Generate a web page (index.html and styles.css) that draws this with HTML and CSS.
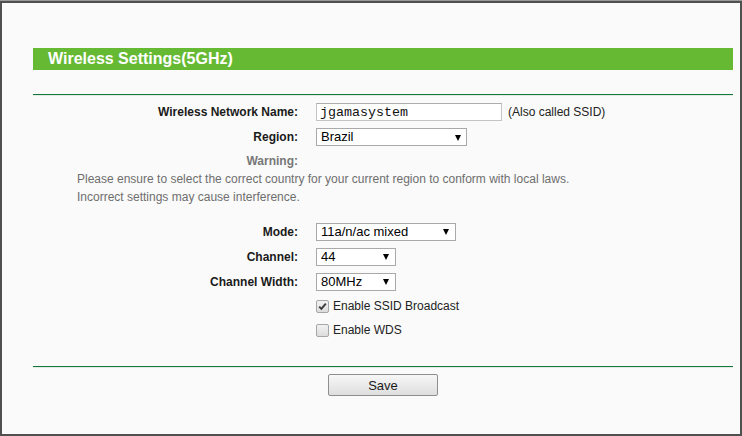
FILE: index.html
```html
<!DOCTYPE html>
<html>
<head>
<meta charset="utf-8">
<title>Wireless Settings(5GHz)</title>
<link rel="stylesheet" href="styles.css">
</head>
<body>
<div class="outer">
  <div class="frame">
    <div class="title">Wireless Settings(5GHz)</div>
    <div class="rule"></div>
    <form class="form">
      <div class="row r-name">
        <label class="lbl">Wireless Network Name:</label>
        <div class="ctl">
          <input class="text" type="text" value="jgamasystem">
          <span class="hint">(Also called SSID)</span>
        </div>
      </div>
      <div class="row r-region">
        <label class="lbl">Region:</label>
        <div class="ctl">
          <span class="sel w-region"><select><option>Brazil</option></select></span>
        </div>
      </div>
      <div class="row r-warn">
        <span class="lbl warn">Warning:</span>
        <span></span>
      </div>
      <p class="warntext">Please ensure to select the correct country for your current region to conform with local laws.<br>Incorrect settings may cause interference.</p>
      <div class="row r-mode">
        <label class="lbl">Mode:</label>
        <div class="ctl">
          <span class="sel w-mode"><select><option>11a/n/ac mixed</option></select></span>
        </div>
      </div>
      <div class="row r-sel">
        <label class="lbl">Channel:</label>
        <div class="ctl">
          <span class="sel w-small"><select><option>44</option></select></span>
        </div>
      </div>
      <div class="row r-sel">
        <label class="lbl">Channel Width:</label>
        <div class="ctl">
          <span class="sel w-small"><select><option>80MHz</option></select></span>
        </div>
      </div>
      <div class="row r-check">
        <span></span>
        <label class="chk">
          <span class="box"><svg width="11" height="11" viewBox="0 0 11 11"><path d="M2.2 5.6 L4.4 7.9 L8.8 2.6" fill="none" stroke="#3a3a3a" stroke-width="1.9"/></svg></span>
          Enable SSID Broadcast
        </label>
      </div>
      <div class="row r-check2">
        <span></span>
        <label class="chk">
          <span class="box"></span>
          Enable WDS
        </label>
      </div>
      <div class="rule rule2"></div>
      <div class="actions">
        <button type="button" class="btn">Save</button>
      </div>
    </form>
  </div>
</div>
</body>
</html>
```
FILE: styles.css
```css
html, body {
  margin: 0;
  padding: 0;
}
body {
  background: #fafafa;
  font-family: "Liberation Sans", Arial, sans-serif;
  font-size: 12px;
  color: #1a1a1a;
}
.outer {
  border-top: 1px solid #9a9a9a;
  height: 436px;
  box-sizing: border-box;
}
.frame {
  height: 435px;
  box-sizing: border-box;
  border: 2px solid #505050;
  background: #fafafa;
  padding: 45px 7px 0 31px;
}
.title {
  height: 22px;
  line-height: 22px;
  background: #66b933;
  color: #fff;
  font-weight: bold;
  font-size: 16px;
  padding-left: 15px;
}
.rule {
  margin-top: 24px;
  height: 1px;
  background: #11783a;
  border-bottom: 1px solid #e3ece5;
}
.form {
  margin: 0;
  display: flex;
  flex-direction: column;
}
.row {
  display: grid;
  grid-template-columns: 265px auto;
  column-gap: 18px;
  align-items: center;
  height: 18px;
}
.lbl {
  text-align: right;
  font-weight: bold;
  color: #1a1a1a;
}
.ctl {
  display: flex;
  align-items: center;
  gap: 6px;
}
.r-name { margin-top: 7px; }
.r-region { margin-top: 7px; }
.r-warn { margin-top: 6px; }
.warn { color: #777; }
.warntext {
  margin: 0;
  padding-left: 44px;
  line-height: 18px;
  color: #6e6e6e;
}
.r-mode { margin-top: 17px; }
.r-sel { margin-top: 7px; }
.r-check { margin-top: 6px; }
.r-check2 { margin-top: 6px; }
.text {
  width: 186px;
  height: 18px;
  box-sizing: border-box;
  border: 1px solid #c4c4c4;
  border-top-color: #adadad;
  background: #fff;
  padding: 0 3px;
  margin: 0;
  font-family: "Liberation Mono", "Courier New", monospace;
  font-size: 13.33px;
  color: #111;
  outline: none;
}
.hint {
  color: #222;
}
.sel {
  position: relative;
  display: inline-block;
  height: 18px;
}
.sel select {
  appearance: none;
  -webkit-appearance: none;
  height: 18px;
  width: 100%;
  box-sizing: border-box;
  border: 1px solid #a9a9a9;
  border-radius: 0;
  background: #fff;
  margin: 0;
  padding: 0 0 0 4px;
  font-family: "Liberation Sans", Arial, sans-serif;
  font-size: 13px;
  line-height: 16px;
  color: #000;
  outline: none;
}
.sel::after {
  content: "";
  position: absolute;
  right: 7px;
  top: 6px;
  width: 0;
  height: 0;
  border-left: 3.5px solid transparent;
  border-right: 3.5px solid transparent;
  border-top: 6px solid #000;
  pointer-events: none;
}
.w-region { width: 151px; }
.w-region::after { right: 6px; top: 7px; }
.w-mode { width: 140px; }
.w-small { width: 80px; }
.chk {
  display: flex;
  align-items: center;
  gap: 4px;
  color: #222;
}
.box {
  width: 11px;
  height: 11px;
  border: 1px solid #a6a6a6;
  border-radius: 2px;
  background: linear-gradient(#f2f2f2, #dcdcdc);
  display: flex;
  align-items: center;
  justify-content: center;
}
.box svg { display: block; }
.rule2 {
  margin-top: 27px;
}
.actions {
  display: flex;
  justify-content: center;
  margin-top: 6px;
}
.btn {
  width: 110px;
  height: 22px;
  border: 1px solid #8e8e8e;
  border-radius: 2px;
  background: linear-gradient(#f7f7f7, #dedede);
  font-family: "Liberation Sans", Arial, sans-serif;
  font-size: 13px;
  color: #1a1a1a;
  padding: 0;
  margin: 0;
}
```
